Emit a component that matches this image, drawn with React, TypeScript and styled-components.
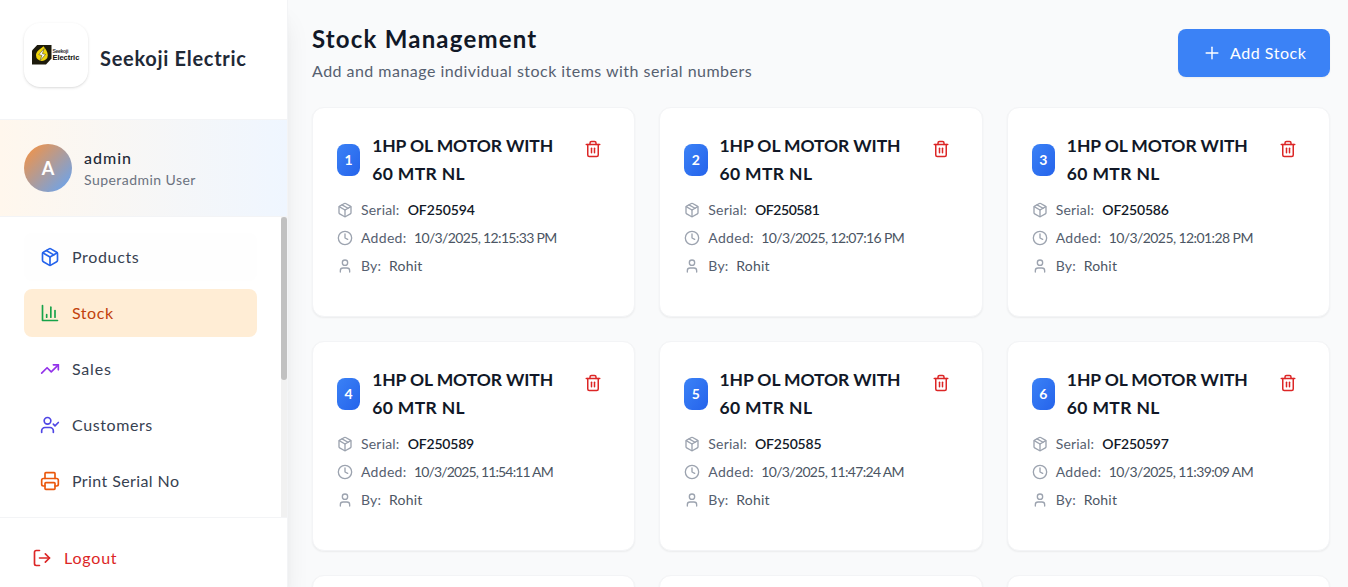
import React from "react";
import styled, { createGlobalStyle } from "styled-components";
import {
  Clock,
  LogOut,
  Package,
  Plus,
  Printer,
  Trash2,
  TrendingUp,
  User,
  UserCheck,
} from "lucide-react";

const GlobalStyle = createGlobalStyle`
  *, *::before, *::after { box-sizing: border-box; }
  body {
    margin: 0;
    background: #f9fafb;
    font-family: Lato, "Open Sans", sans-serif;
    font-size: 16px;
    line-height: 24px;
    color: #111827;
    overflow: hidden;
  }
  h1, h2, p { margin: 0; }
  button { font: inherit; border: 0; background: none; cursor: pointer; }
  svg { display: block; flex-shrink: 0; }
`;

const Label = styled.span<{ $track?: number }>`
  letter-spacing: ${(p) => p.$track ?? 0}px;
  white-space: nowrap;
`;

const Page = styled.div`
  display: flex;
  height: 587px;
  overflow: hidden;
`;

const Sidebar = styled.aside`
  position: relative;
  z-index: 1;
  display: flex;
  flex-direction: column;
  width: 288px;
  flex-shrink: 0;
  background: #fff;
  border-right: 1px solid #f3f4f6;
  box-shadow: 0 20px 25px -5px rgba(0, 0, 0, 0.1), 0 8px 10px -6px rgba(0, 0, 0, 0.1);
`;

const Brand = styled.div`
  display: flex;
  align-items: center;
  gap: 12px;
  height: 120px;
  flex-shrink: 0;
  padding: 23px 24px 26px;
  border-bottom: 1px solid #f3f4f6;
`;

const LogoTile = styled.div`
  display: flex;
  align-self: flex-start;
  align-items: center;
  justify-content: center;
  width: 64px;
  height: 64px;
  border-radius: 16px;
  background: #fff;
  box-shadow: 0 1px 3px rgba(0, 0, 0, 0.12), 0 1px 2px -1px rgba(0, 0, 0, 0.1);
`;

const BrandName = styled.div`
  font-size: 20px;
  line-height: 28px;
  font-weight: 700;
  color: #1f2937;
`;

const Profile = styled.div`
  display: flex;
  align-items: center;
  gap: 12px;
  height: 97px;
  flex-shrink: 0;
  padding: 0 24px;
  background: linear-gradient(to right, #fff7ed, #eff6ff);
  border-bottom: 1px solid #f3f4f6;
`;

const Avatar = styled.div`
  display: flex;
  align-items: center;
  justify-content: center;
  width: 48px;
  height: 48px;
  border-radius: 50%;
  background: linear-gradient(135deg, #fb923c, #60a5fa);
  color: #fff;
  font-size: 18px;
  font-weight: 700;
`;

const ProfileText = styled.div`
  display: flex;
  flex-direction: column;
`;

const ProfileName = styled(Label)`
  font-weight: 500;
  color: #1f2937;
`;

const ProfileRole = styled(Label)`
  font-size: 14px;
  line-height: 20px;
  color: #6b7280;
`;

const NavArea = styled.div`
  display: flex;
  height: 300px;
  flex-shrink: 0;
`;

const Nav = styled.nav`
  display: flex;
  flex: 1;
  flex-direction: column;
  gap: 8px;
  padding: 16px 24px 0;
`;

const NavItem = styled.div<{ $active?: boolean; $hover?: boolean; $icon: string }>`
  display: flex;
  align-items: center;
  gap: 12px;
  height: 48px;
  flex-shrink: 0;
  padding: 0 16px;
  border-radius: 8px;
  background: ${(p) => (p.$active ? "#ffedd5" : p.$hover ? "#fefefe" : "transparent")};
  color: ${(p) => (p.$active ? "#c2410c" : "#374151")};

  svg {
    color: ${(p) => p.$icon};
  }
`;

const ScrollTrack = styled.div`
  width: 6px;
  background: #f1f1f1;
`;

const ScrollThumb = styled.div`
  height: 163px;
  border-radius: 3px;
  background: #c1c1c1;
`;

const SidebarFooter = styled.div`
  flex: 1;
  padding: 16px;
  border-top: 1px solid #f3f4f6;
`;

const LogoutButton = styled.button`
  display: flex;
  align-items: center;
  gap: 12px;
  height: 48px;
  padding: 0 16px;
  color: #dc2626;
`;

const Main = styled.main`
  flex: 1;
  min-width: 0;
  padding: 23px 18px 0 24px;
`;

const Header = styled.header`
  display: flex;
  align-items: center;
  justify-content: space-between;
  margin-bottom: 24px;
`;

const Title = styled.h1`
  font-size: 24px;
  line-height: 32px;
  font-weight: 700;
`;

const Subtitle = styled.p`
  margin-top: 4px;
  color: #566070;
`;

const AddButton = styled.button`
  display: flex;
  align-items: center;
  gap: 8px;
  width: 152px;
  height: 48px;
  padding: 0 24px;
  border-radius: 8px;
  background: #3b82f6;
  color: #fff;
  box-shadow: 0 1px 2px rgba(0, 0, 0, 0.05);
`;

const Grid = styled.div`
  display: grid;
  grid-template-columns: repeat(3, 1fr);
  gap: 24px;
`;

const Card = styled.article`
  height: 210px;
  padding: 24px;
  border: 1px solid #f3f4f6;
  border-radius: 12px;
  background: #fff;
  box-shadow: 0 1px 2px rgba(0, 0, 0, 0.06);
`;

const CardHead = styled.div`
  display: flex;
  align-items: flex-start;
  margin-bottom: 12px;
`;

const CardTitleRow = styled.div`
  display: flex;
  flex: 1;
  align-items: center;
  gap: 12px;
`;

const Badge = styled.div`
  display: flex;
  align-items: center;
  justify-content: center;
  width: 23.2px;
  height: 32px;
  border-radius: 8px;
  background: linear-gradient(to bottom right, #3b82f6, #2563eb);
  color: #fff;
  font-size: 14px;
  font-weight: 700;
`;

const CardTitle = styled.h2`
  display: flex;
  flex-direction: column;
  font-size: 17.5px;
  line-height: 28px;
  font-weight: 700;
`;

const DeleteButton = styled.button`
  padding: 8px;
  color: #dc2626;
`;

const Facts = styled.div`
  display: flex;
  flex-direction: column;
  gap: 8px;
  font-size: 14px;
  line-height: 20px;
  color: #4b5563;
`;

const Fact = styled.div`
  display: flex;
  align-items: center;
  gap: 8px;

  svg {
    color: #9ca3af;
  }
`;

const FactName = styled(Label)<{ $width: number }>`
  width: ${(p) => p.$width}px;
  color: #566070;
`;

const Serial = styled(Label)`
  font-weight: 600;
  color: #111827;
`;

function Logo() {
  return (
    <svg width="50" height="24" viewBox="0 0 50 24">
      <path d="M6.2 2H20.5V15.6L15 21.4H1V7.6Z" fill="#1c1a0c" />
      <path d="M12.4 3.2C14.6 6 16.8 8.6 16.8 12.2A5.9 5.9 0 0 1 5 12.2C5 8.4 8.7 6.4 12.4 3.2Z" fill="#f0d50c" />
      <path d="M13.2 5.5L7.8 11.6L11 12.4L8.9 17.8L14.6 11.4L11.4 10.7Z" fill="#fff" stroke="#55501c" strokeWidth="0.6" />
      <text x="21.4" y="10" fontSize="5.2" fontWeight="700" textLength="16" fill="#333" fontFamily="Liberation Sans, sans-serif">
        Seekoji
      </text>
      <text x="21.4" y="16.6" fontSize="7.6" fontWeight="700" textLength="27" fill="#111" fontFamily="Liberation Sans, sans-serif">
        Electric
      </text>
    </svg>
  );
}

function BarChartIcon() {
  return (
    <svg
      width="20"
      height="20"
      viewBox="0 0 24 24"
      fill="none"
      stroke="currentColor"
      strokeWidth="2"
      strokeLinecap="round"
      strokeLinejoin="round"
    >
      <path d="M3 3v18h18" />
      <path d="M18 17V9" />
      <path d="M13 17V5" />
      <path d="M8 17v-3" />
    </svg>
  );
}

const navItems = [
  { name: "Products", track: 0.65, color: "#2563eb", icon: <Package size={20} />, hover: true },
  { name: "Stock", track: 0.55, color: "#16a34a", icon: <BarChartIcon />, active: true },
  { name: "Sales", track: 0.8, color: "#9333ea", icon: <TrendingUp size={20} /> },
  { name: "Customers", track: 0.6, color: "#4f46e5", icon: <UserCheck size={20} /> },
  { name: "Print Serial No", track: 0.4, color: "#ea580c", icon: <Printer size={20} /> },
];

const stock = [
  { serial: "OF250594", serialTrack: -0.1, added: "10/3/2025, 12:15:33 PM", addedTrack: -0.65 },
  { serial: "OF250581", serialTrack: -0.45, added: "10/3/2025, 12:07:16 PM", addedTrack: -0.65 },
  { serial: "OF250586", serialTrack: -0.2, added: "10/3/2025, 12:01:28 PM", addedTrack: -0.58 },
  { serial: "OF250589", serialTrack: -0.2, added: "10/3/2025, 11:54:11 AM", addedTrack: -0.85 },
  { serial: "OF250585", serialTrack: -0.2, added: "10/3/2025, 11:47:24 AM", addedTrack: -0.68 },
  { serial: "OF250597", serialTrack: -0.2, added: "10/3/2025, 11:39:09 AM", addedTrack: -0.6 },
];

export default function App() {
  return (
    <>
      <GlobalStyle />
      <Page>
        <Sidebar>
          <Brand>
            <LogoTile>
              <Logo />
            </LogoTile>
            <BrandName>
              <Label $track={0.7}>Seekoji Electric</Label>
            </BrandName>
          </Brand>
          <Profile>
            <Avatar>A</Avatar>
            <ProfileText>
              <ProfileName $track={1}>admin</ProfileName>
              <ProfileRole $track={0.45}>Superadmin User</ProfileRole>
            </ProfileText>
          </Profile>
          <NavArea>
            <Nav>
              {navItems.map((item) => (
                <NavItem key={item.name} $active={item.active} $hover={item.hover} $icon={item.color}>
                  {item.icon}
                  <Label $track={item.track}>{item.name}</Label>
                </NavItem>
              ))}
            </Nav>
            <ScrollTrack>
              <ScrollThumb />
            </ScrollTrack>
          </NavArea>
          <SidebarFooter>
            <LogoutButton>
              <LogOut size={20} />
              <Label $track={0.8}>Logout</Label>
            </LogoutButton>
          </SidebarFooter>
        </Sidebar>
        <Main>
          <Header>
            <div>
              <Title>
                <Label $track={1.2}>Stock Management</Label>
              </Title>
              <Subtitle>
                <Label $track={0.47}>Add and manage individual stock items with serial numbers</Label>
              </Subtitle>
            </div>
            <AddButton>
              <Plus size={20} strokeWidth={1.7} />
              <Label $track={0.55}>Add Stock</Label>
            </AddButton>
          </Header>
          <Grid>
            {stock.map((item, index) => (
              <Card key={item.serial}>
                <CardHead>
                  <CardTitleRow>
                    <Badge>{index + 1}</Badge>
                    <CardTitle>
                      <Label $track={-0.1}>1HP OL MOTOR WITH</Label>
                      <Label $track={0.35}>60 MTR NL</Label>
                    </CardTitle>
                  </CardTitleRow>
                  <DeleteButton>
                    <Trash2 size={18} />
                  </DeleteButton>
                </CardHead>
                <Facts>
                  <Fact>
                    <Package size={16} />
                    <FactName $width={38.7} $track={0.2}>Serial:</FactName>
                    <Serial $track={item.serialTrack}>{item.serial}</Serial>
                  </Fact>
                  <Fact>
                    <Clock size={16} />
                    <FactName $width={45} $track={0.3}>Added:</FactName>
                    <Label $track={item.addedTrack}>{item.added}</Label>
                  </Fact>
                  <Fact>
                    <User size={16} />
                    <FactName $width={20} $track={0.2}>By:</FactName>
                    <Label $track={0.2}>Rohit</Label>
                  </Fact>
                </Facts>
              </Card>
            ))}
            <Card />
            <Card />
            <Card />
          </Grid>
        </Main>
      </Page>
    </>
  );
}
